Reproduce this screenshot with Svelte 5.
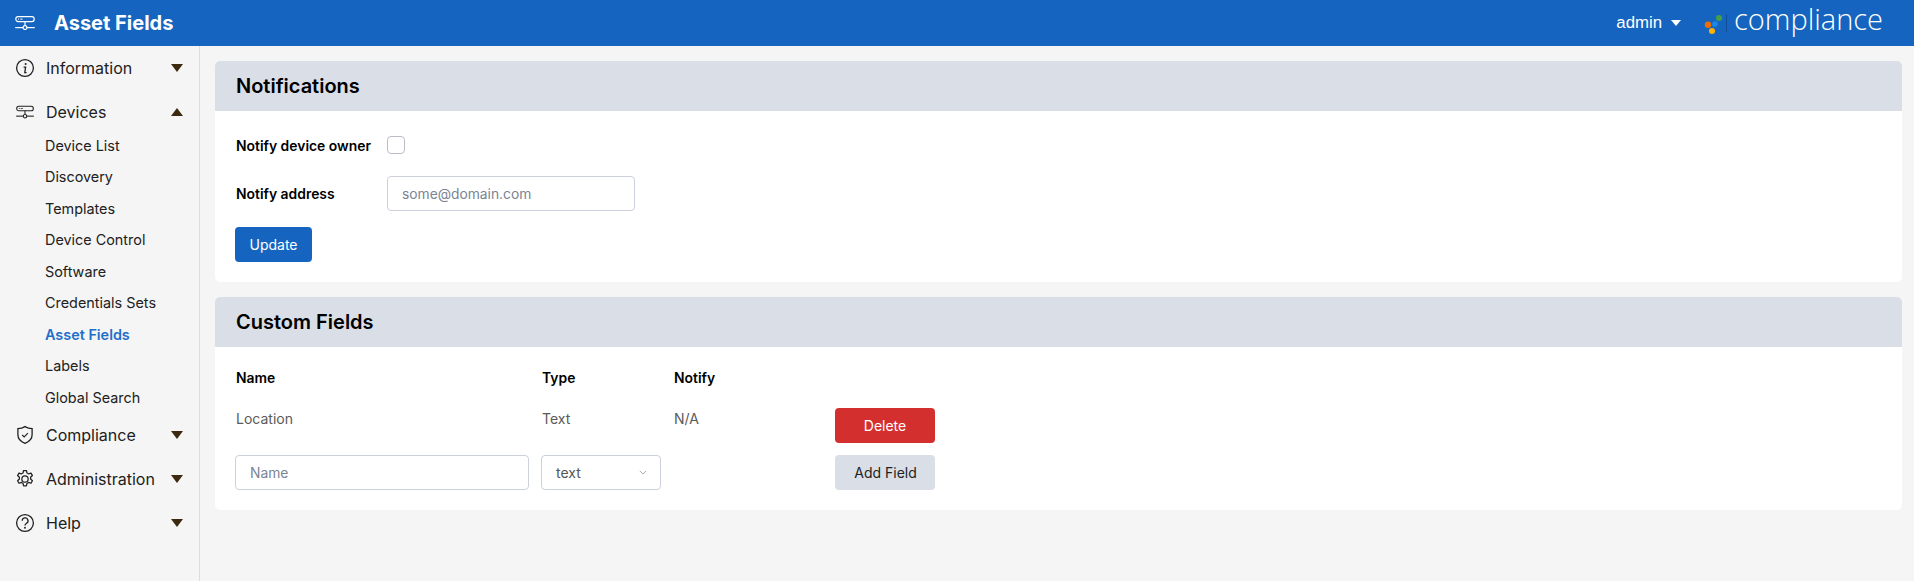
<script>
	const devices = [
		'Device List',
		'Discovery',
		'Templates',
		'Device Control',
		'Software',
		'Credentials Sets',
		'Asset Fields',
		'Labels',
		'Global Search'
	];
</script>

{#snippet deviceIcon()}
	<svg class="device-icon" viewBox="0 0 20 14" fill="none" stroke="currentColor" stroke-width="1.2">
		<rect x="0.8" y="0.6" width="18.4" height="5" rx="2.3" />
		<circle cx="3.6" cy="3.1" r="0.6" fill="currentColor" stroke="none" />
		<line x1="5.2" y1="3.1" x2="7.6" y2="3.1" stroke-width="0.9" />
		<line x1="10" y1="5.6" x2="10" y2="9.5" />
		<line x1="0.2" y1="11.6" x2="8" y2="11.6" />
		<line x1="12" y1="11.6" x2="19.8" y2="11.6" />
		<circle cx="10" cy="11.6" r="1.9" />
	</svg>
{/snippet}

{#snippet caret(up = false)}
	<svg class="caret" viewBox="0 0 12 8"><path d={up ? 'M0 8 L6 0 L12 8 Z' : 'M0 0 L12 0 L6 8 Z'} /></svg>
{/snippet}

<div class="page">
	<header class="topbar">
		<div class="brand">
			<span class="brand-icon">{@render deviceIcon()}</span>
			<span class="brand-title">Asset Fields</span>
		</div>
		<div class="top-right">
			<span class="user">admin</span>
			<svg class="user-caret" viewBox="0 0 10 6"><path d="M0 0 L10 0 L5 6 Z" /></svg>
			<svg class="logo" viewBox="0 0 19 20">
				<circle cx="15" cy="4" r="3" fill="#43a047" />
				<circle cx="11" cy="10" r="2.8" fill="#1e88e5" />
				<circle cx="4" cy="10.7" r="3.2" fill="#ef6c00" />
				<circle cx="8" cy="17" r="3" fill="#ffb300" />
			</svg>
			<span class="logo-rule"></span>
			<span class="logo-text">compliance</span>
		</div>
	</header>

	<div class="body">
		<nav class="sidebar">
			<div class="nav-item">
				<svg class="icon" viewBox="0 0 20 20" fill="none" stroke="currentColor" stroke-width="1.3">
					<circle cx="10" cy="10" r="8.4" />
					<circle cx="10.6" cy="6" r="1" fill="currentColor" stroke="none" />
					<path d="M8.6 9.2 H10.6 L9.8 14.6 H11.6" stroke-width="1.3" />
				</svg>
				<span class="nav-label">Information</span>
				{@render caret()}
			</div>

			<div class="nav-item">
				<span class="icon-box">{@render deviceIcon()}</span>
				<span class="nav-label">Devices</span>
				{@render caret(true)}
			</div>
			<ul class="subnav">
				{#each devices as d}
					<li class:active={d === 'Asset Fields'}>{d}</li>
				{/each}
			</ul>

			<div class="nav-item">
				<svg class="icon" viewBox="0 0 20 20" fill="none" stroke="currentColor" stroke-width="1.3">
					<path d="M10 1.6 C7.8 3 5.2 3.6 2.9 3.6 V9.8 C2.9 13.8 5.8 16.8 10 18.4 C14.2 16.8 17.1 13.8 17.1 9.8 V3.6 C14.8 3.6 12.2 3 10 1.6 Z" />
					<path d="M7.2 10 L9.2 12 L12.9 8.2" stroke-width="1.1" />
				</svg>
				<span class="nav-label">Compliance</span>
				{@render caret()}
			</div>

			<div class="nav-item">
				<svg class="icon" viewBox="0 0 24 24" fill="none" stroke="currentColor" stroke-width="1.5" stroke-linejoin="round">
					<path d="M10.3 1.8 h3.4 l0.7 3 a7.4 7.4 0 0 1 1.9 1.1 l2.9 -1 l1.7 3 l-2.2 2 a7.4 7.4 0 0 1 0 2.2 l2.2 2 l-1.7 3 l-2.9 -1 a7.4 7.4 0 0 1 -1.9 1.1 l-0.7 3 h-3.4 l-0.7 -3 a7.4 7.4 0 0 1 -1.9 -1.1 l-2.9 1 l-1.7 -3 l2.2 -2 a7.4 7.4 0 0 1 0 -2.2 l-2.2 -2 l1.7 -3 l2.9 1 a7.4 7.4 0 0 1 1.9 -1.1 Z" />
					<circle cx="12" cy="12" r="3.8" />
				</svg>
				<span class="nav-label">Administration</span>
				{@render caret()}
			</div>

			<div class="nav-item">
				<svg class="icon" viewBox="0 0 20 20" fill="none" stroke="currentColor" stroke-width="1.3">
					<circle cx="10" cy="10" r="8.4" />
					<path d="M7.2 7.8 A2.9 2.9 0 1 1 11.6 10.2 C10.5 10.9 10 11.3 10 12.4" />
					<circle cx="10" cy="14.8" r="0.95" fill="currentColor" stroke="none" />
				</svg>
				<span class="nav-label">Help</span>
				{@render caret()}
			</div>
		</nav>

		<main class="content">
			<section class="card">
				<h2 class="card-title">Notifications</h2>
				<div class="card-body notify-body">
					<div class="form-row first">
						<label for="owner">Notify device owner</label>
						<input id="owner" class="check" type="checkbox" />
					</div>
					<div class="form-row second">
						<label for="addr">Notify address</label>
						<input id="addr" class="text-input addr" type="text" placeholder="some@domain.com" />
					</div>
					<button class="btn primary update">Update</button>
				</div>
			</section>

			<section class="card">
				<h2 class="card-title">Custom Fields</h2>
				<div class="card-body fields">
					<div class="th">Name</div>
					<div class="th">Type</div>
					<div class="th notify">Notify</div>
					<div></div>

					<div class="td">Location</div>
					<div class="td">Text</div>
					<div class="td notify">N/A</div>
					<div><button class="btn danger">Delete</button></div>

					<div><input class="text-input name" type="text" placeholder="Name" /></div>
					<div class="select">
						<span>text</span>
						<svg viewBox="0 0 10 6" fill="none" stroke="#8a94a6" stroke-width="1"><path d="M1 1 L5 5 L9 1" /></svg>
					</div>
					<div></div>
					<div><button class="btn light">Add Field</button></div>
				</div>
			</section>
		</main>
	</div>
</div>

<style>
	:global(body) {
		margin: 0;
		background: #f5f5f5;
	}

	.page {
		height: 581px;
		overflow: hidden;
		font-family: Inter, "Liberation Sans", sans-serif;
		background: #f5f5f5;
		color: #212121;
	}

	.topbar {
		height: 46px;
		background: #1565c0;
		color: #fff;
		display: flex;
		align-items: center;
		justify-content: space-between;
		padding: 0 31px 0 15px;
	}

	.brand {
		display: flex;
		align-items: center;
	}

	.brand-icon {
		display: flex;
		width: 20px;
		height: 14px;
		margin: 0 19px 0 0;
	}

	.brand-title {
		font-size: 20px;
		font-weight: 700;
	}

	.device-icon {
		width: 100%;
		height: 100%;
		display: block;
	}

	.top-right {
		display: flex;
		align-items: center;
	}

	.user {
		font-family: "Liberation Sans", sans-serif;
		font-size: 16.8px;
		padding-bottom: 1px;
	}

	.user-caret {
		width: 10px;
		height: 6px;
		fill: #fff;
		margin-left: 9px;
	}

	.logo {
		width: 19px;
		height: 20px;
		margin: 1px 0 0 23px;
	}

	.logo-rule {
		width: 1px;
		height: 18px;
		background: rgba(0, 0, 0, 0.2);
		margin-left: 3px;
	}

	.logo-text {
		font-family: "Open Sans", sans-serif;
		font-weight: 350;
		font-size: 29px;
		margin-left: 7px;
		line-height: 46px;
		height: 46px;
		margin-top: -9px;
	}

	.body {
		display: flex;
		height: 535px;
	}

	.sidebar {
		width: 199px;
		border-right: 1px solid #dadee8;
		flex-shrink: 0;
	}

	.nav-item {
		height: 44px;
		display: flex;
		align-items: center;
		padding: 0 16px 0 15px;
		font-size: 16px;
	}

	.icon {
		width: 20px;
		height: 20px;
		flex-shrink: 0;
	}

	.icon-box {
		width: 20px;
		height: 14px;
		padding: 0 1px;
		box-sizing: border-box;
		flex-shrink: 0;
	}

	.nav-label {
		flex: 1;
		margin-left: 11px;
	}

	.caret {
		width: 12px;
		height: 8px;
		fill: #3b2a10;
	}

	.subnav {
		list-style: none;
		margin: -4.5px 0 -0.5px;
		padding: 0 0 0 45px;
		font-size: 14.4px;
	}

	.subnav li {
		height: 31.5px;
		line-height: 31.5px;
	}

	.subnav li.active {
		color: #1e6fc9;
		font-weight: 600;
	}

	.content {
		flex: 1;
		padding: 15px 12px 0 15px;
		display: flex;
		flex-direction: column;
		gap: 15px;
		align-items: stretch;
	}

	.card {
		background: #fff;
		border-radius: 5px;
		overflow: hidden;
	}

	.card-title {
		margin: 0;
		height: 50px;
		line-height: 50px;
		padding: 0 21px;
		background: #dadee6;
		color: #000;
		font-size: 20px;
		font-weight: 600;
	}

	.notify-body {
		padding: 0 20px 20px;
		height: 171px;
		box-sizing: border-box;
	}

	.form-row {
		display: flex;
		align-items: center;
	}

	.form-row.first {
		height: 65px;
		padding-top: 3px;
		box-sizing: border-box;
	}

	.form-row.first label {
		padding-top: 2px;
	}

	.form-row.second {
		height: 35px;
		margin-bottom: 16px;
	}

	label {
		width: 151px;
		padding-left: 1px;
		font-size: 13.9px;
		font-weight: 600;
		color: #000;
	}

	.check {
		appearance: none;
		width: 18px;
		height: 18px;
		margin: 0;
		border: 1px solid #b9bdc7;
		border-radius: 4px;
		background: #fff;
	}

	.text-input {
		height: 35px;
		box-sizing: border-box;
		border: 1px solid #cbd0dc;
		border-radius: 4px;
		padding: 0 14px;
		font-family: inherit;
		font-size: 13.8px;
		background: #fff;
		outline: none;
	}

	.text-input::placeholder {
		color: #7b8494;
		opacity: 1;
	}

	.addr {
		width: 248px;
	}

	.name {
		width: 294px;
	}

	.btn {
		height: 35px;
		border: none;
		border-radius: 4px;
		font-family: inherit;
		font-size: 14px;
		font-weight: 400;
		padding: 0;
	}

	.primary {
		width: 77px;
		background: #1565c0;
		color: #fff;
	}

	.danger {
		width: 100px;
		background: #d32f2f;
		color: #fff;
	}

	.light {
		width: 100px;
		padding-left: 1px;
		background: #dadee6;
		color: #222;
	}

	.fields {
		display: grid;
		grid-template-columns: 306px 133px 161px 100px;
		grid-template-rows: 61px 47px 35px;
		align-items: start;
		padding: 0 20px 20px;
		height: 163px;
		box-sizing: border-box;
	}

	.th {
		font-size: 13.9px;
		font-weight: 600;
		color: #000;
		line-height: 61px;
		padding: 1px 0 0 1px;
		height: 60px;
	}

	.td {
		font-size: 14px;
		color: #5a5a5a;
		line-height: 20px;
		padding: 1px 0 0 1px;
	}

	.th.notify,
	.td.notify {
		padding-left: 0;
	}

	.select {
		width: 120px;
		height: 35px;
		box-sizing: border-box;
		border: 1px solid #cbd0dc;
		border-radius: 4px;
		display: flex;
		align-items: center;
		justify-content: space-between;
		padding: 0 13px 0 14px;
		font-size: 14px;
		color: #555;
	}

	.select svg {
		width: 8px;
		height: 5px;
	}
</style>
